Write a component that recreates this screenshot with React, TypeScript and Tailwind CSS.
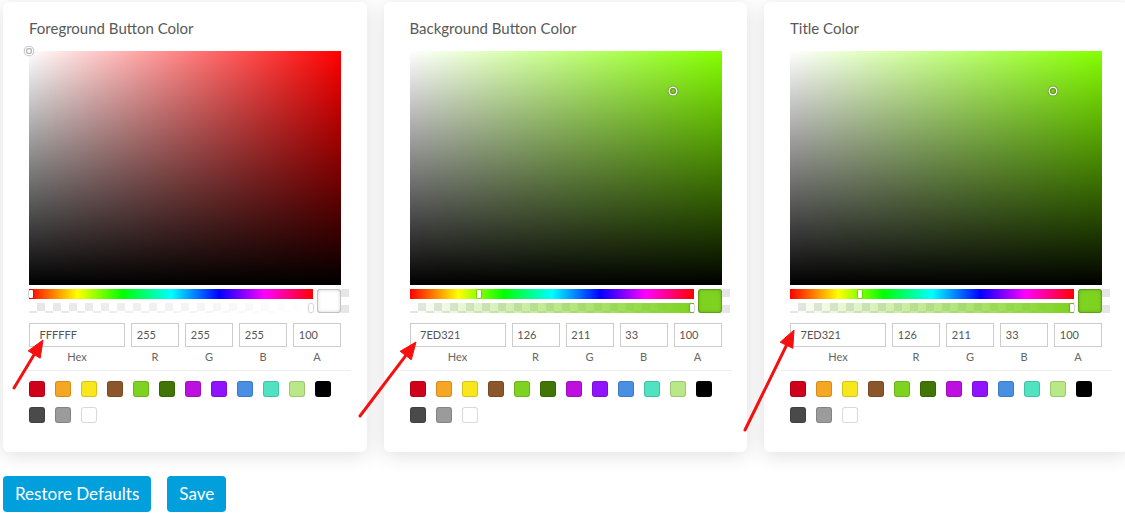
import type { CSSProperties } from 'react'

type PickerProps = {
  title: string
  hex: string
  r: number
  g: number
  b: number
}

const presetColors = [
  '#D0021B',
  '#F5A623',
  '#F8E71C',
  '#8B572A',
  '#7ED321',
  '#417505',
  '#BD10E0',
  '#9013FE',
  '#4A90E2',
  '#50E3C2',
  '#B8E986',
  '#000000',
  '#4A4A4A',
  '#9B9B9B',
  '#FFFFFF',
]

const checker =
  'bg-[conic-gradient(#e6e6e6_25%,#ffffff_0_50%,#e6e6e6_0_75%,#ffffff_0)] bg-[length:16px_16px]'

function toHsv(r: number, g: number, b: number) {
  const max = Math.max(r, g, b)
  const min = Math.min(r, g, b)
  const delta = max - min
  let hue = 0

  if (delta !== 0) {
    if (max === r) {
      hue = 60 * (((g - b) / delta) % 6)
    } else if (max === g) {
      hue = 60 * ((b - r) / delta + 2)
    } else {
      hue = 60 * ((r - g) / delta + 4)
    }
  }

  if (hue < 0) {
    hue += 360
  }

  return {
    hue,
    saturation: max === 0 ? 0 : delta / max,
    value: max / 255,
  }
}

function ColorCard({ title, hex, r, g, b }: PickerProps) {
  const { hue, saturation, value } = toHsv(r, g, b)
  const colour = `rgb(${r}, ${g}, ${b})`
  const pointerStyle: CSSProperties = {
    left: `${saturation * 100}%`,
    top: `${(1 - value) * 100}%`,
  }

  return (
    <article className="w-[363.5px] shrink-0 rounded-md bg-white px-4 pb-[19px] pt-[16px] shadow-[0_3px_20px_rgba(0,0,0,0.13)]">
      <h3 className="h-5 pl-[10px] text-[15px] leading-5 text-[#595959]">{title}</h3>

      <div className="w-[332px] px-[10px] pt-[13px]">
        <div className="relative h-[234px] w-[312px]" style={{ background: `hsl(${hue}, 100%, 50%)` }}>
          <div className="absolute inset-0 bg-[linear-gradient(to_right,#fff,rgba(255,255,255,0))]" />
          <div className="absolute inset-0 bg-[linear-gradient(to_top,#000,rgba(0,0,0,0))]" />
          <div
            className="absolute size-[6px] -translate-x-[3px] -translate-y-[3px] rounded-full shadow-[0_0_0_1.5px_#fff,inset_0_0_1px_1px_rgba(0,0,0,0.3),0_0_1px_2px_rgba(0,0,0,0.4)]"
            style={pointerStyle}
          />
        </div>

        <div className="flex">
          <div className="flex-1 py-1">
            <div className="relative h-[10px] bg-[linear-gradient(to_right,#f00_0%,#ff0_17%,#0f0_33%,#0ff_50%,#00f_67%,#f0f_83%,#f00_100%)]">
              <div
                className="absolute top-px h-2 w-1 -translate-x-[2px] rounded-[1px] bg-white shadow-[0_0_2px_rgba(0,0,0,0.6)]"
                style={{ left: `max(2px, ${(hue / 360) * 100}%)` }}
              />
            </div>
            <div className={`relative mt-1 h-[10px] ${checker}`}>
              <div
                className="absolute inset-0"
                style={{ background: `linear-gradient(to right, rgba(${r}, ${g}, ${b}, 0), ${colour})` }}
              />
              <div className="absolute right-0 top-px h-2 w-1 rounded-[1px] bg-white shadow-[0_0_2px_rgba(0,0,0,0.6)]" />
            </div>
          </div>
          <div className={`-mr-2 ml-1 mt-1 h-6 w-8 ${checker}`}>
            <div
              className="size-6 rounded-[3px] shadow-[inset_0_0_0_1px_rgba(0,0,0,0.15),inset_0_0_4px_rgba(0,0,0,0.25)]"
              style={{ background: colour }}
            />
          </div>
        </div>

        <div className="flex gap-[6px] pt-[6px]">
          {[
            { label: 'Hex', value: hex, grow: 'flex-[2]' },
            { label: 'R', value: String(r), grow: 'flex-1' },
            { label: 'G', value: String(g), grow: 'flex-1' },
            { label: 'B', value: String(b), grow: 'flex-1' },
            { label: 'A', value: '100', grow: 'flex-1' },
          ].map((field) => (
            <div key={field.label} className={field.grow}>
              <div className="flex h-6 items-center border border-[#ccc] pl-[10%] text-[11px] text-[#555]">
                {field.value}
              </div>
              <p className="pb-1 pt-[3px] text-center text-[11px] leading-[14px] text-[#666]">{field.label}</p>
            </div>
          ))}
        </div>

        <div className="-mx-[10px] mt-[2px] flex flex-wrap border-t border-[#eee] pl-[10px] pt-[10px]">
          {presetColors.map((preset) => (
            <div
              key={preset}
              className="mb-[10px] mr-[10px] size-4 rounded-[3px] shadow-[inset_0_0_0_1px_rgba(0,0,0,0.15)]"
              style={{ background: preset }}
            />
          ))}
        </div>
      </div>
    </article>
  )
}

function arrowShape(x1: number, y1: number, x2: number, y2: number) {
  const angle = Math.atan2(y2 - y1, x2 - x1)
  const headLength = 17
  const headWidth = 7
  const baseX = x2 - headLength * Math.cos(angle)
  const baseY = y2 - headLength * Math.sin(angle)
  const offsetX = headWidth * Math.sin(angle)
  const offsetY = -headWidth * Math.cos(angle)

  return {
    line: { x1, y1, x2: baseX, y2: baseY },
    head: `${x2},${y2} ${baseX + offsetX},${baseY + offsetY} ${baseX - offsetX},${baseY - offsetY}`,
  }
}

const arrows = [
  arrowShape(14, 388, 43, 340),
  arrowShape(360, 416, 416, 342),
  arrowShape(745, 430, 794, 330),
]

export default function App() {
  return (
    <div className="relative h-[519px] w-[1125px] overflow-hidden bg-white font-['Lato','Liberation_Sans',sans-serif]">
      <div className="flex gap-[17px] pl-[3px] pt-[2px]">
        <ColorCard title="Foreground Button Color" hex="FFFFFF" r={255} g={255} b={255} />
        <ColorCard title="Background Button Color" hex="7ED321" r={126} g={211} b={33} />
        <ColorCard title="Title Color" hex="7ED321" r={126} g={211} b={33} />
      </div>

      <div className="mt-[24px] flex gap-4 pl-[3px]">
        <button type="button" className="h-9 rounded bg-[#029fdd] px-[12px] text-[17px] text-white">
          Restore Defaults
        </button>
        <button type="button" className="h-9 rounded bg-[#029fdd] px-[12px] text-[17px] text-white">
          Save
        </button>
      </div>

      <svg className="pointer-events-none absolute inset-0" width="1125" height="519" viewBox="0 0 1125 519">
        {arrows.map((arrow, index) => (
          <g key={index} fill="#f51010" stroke="#f51010">
            <line {...arrow.line} strokeWidth="3" strokeLinecap="round" />
            <polygon points={arrow.head} strokeWidth="1" strokeLinejoin="round" />
          </g>
        ))}
      </svg>
    </div>
  )
}
